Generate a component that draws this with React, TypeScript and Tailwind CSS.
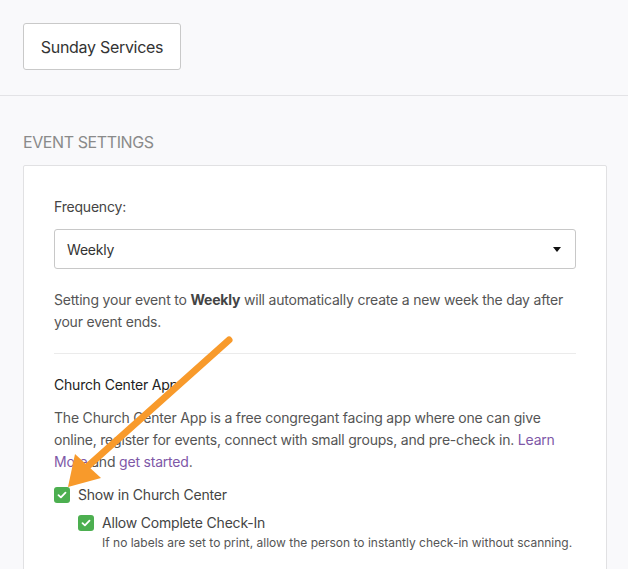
import React from "react";

function Check() {
  return (
    <span className="flex h-4 w-4 shrink-0 items-center justify-center rounded-[3px] bg-[#4caf50]">
      <svg width="10" height="8" viewBox="0 0 10 8" fill="none">
        <path d="M1.5 4.2 L3.9 6.4 L8.5 1.6" stroke="white" strokeWidth="1.8" strokeLinecap="round" strokeLinejoin="round" />
      </svg>
    </span>
  );
}

export default function App() {
  return (
    <div className="relative min-h-[569px] w-[628px] overflow-hidden bg-[#f9f9fb] font-['Inter','Noto_Sans',sans-serif] tracking-[-0.2px] text-[#333]">
      <div className="h-[96px] border-b border-[#e3e3e6] pl-[23px] pt-[23px]">
        <button className="flex h-[47px] w-[158px] items-center justify-center rounded-[3px] border border-[#c9c9c9] bg-white text-[16px] tracking-[-0.3px] text-[#333]">
          Sunday Services
        </button>
      </div>
      <div className="px-[23px] pr-[21px] pt-[34px]">
        <div className="text-[16px] leading-[24px] tracking-[-0.4px] text-[#8a8a8a]">EVENT SETTINGS</div>
        <div className="mt-[11px] h-[420px] rounded-t-[2px] border border-[#e1e1e3] bg-white px-[30px] pt-[31px]">
          <div className="text-[14px] leading-[20px] text-[#444]">Frequency:</div>
          <div className="mt-[12px] flex h-[40px] items-center justify-between rounded-[3px] border border-[#c8c8c8] px-[12px] text-[14px] text-[#333]">
            <span>Weekly</span>
            <svg width="8" height="5" viewBox="0 0 8 5" className="mr-[2px]">
              <path d="M0 0 H8 L4 5 Z" fill="#111" />
            </svg>
          </div>
          <p className="mt-[20px] whitespace-nowrap text-[14px] leading-[22px] text-[#555]">
            Setting your event to <b className="font-bold text-[#444]">Weekly</b> will automatically create a new week the day after
            <br />
            your event ends.
          </p>
          <div className="mt-[20px] h-px bg-[#ebebeb]" />
          <div className="mt-[21px] text-[14px] leading-[20px] text-[#222]">Church Center App</div>
          <p className="mt-[12px] whitespace-nowrap text-[14px] leading-[22px] text-[#555]">
            The Church Center App is a free congregant facing app where one can give
            <br />
            online, register for events, connect with small groups, and pre-check in.{" "}
            <span className="text-[#7e58a7]">Learn</span>
            <br />
            <span className="text-[#7e58a7]">More</span> and <span className="text-[#7e58a7]">get started</span>.
          </p>
          <div className="mt-[12px] flex items-center gap-[8px] text-[14px] leading-[20px] text-[#444]">
            <Check />
            <span>Show in Church Center</span>
          </div>
          <div className="ml-[24px] mt-[8px] flex items-start gap-[8px]">
            <div className="pt-[2px]">
              <Check />
            </div>
            <div>
              <div className="text-[14px] leading-[20px] text-[#444]">Allow Complete Check-In</div>
              <div className="mt-[2px] whitespace-nowrap text-[12px] leading-[16px] tracking-[0px] text-[#555]">
                If no labels are set to print, allow the person to instantly check-in without scanning.
              </div>
            </div>
          </div>
        </div>
      </div>
      <svg className="pointer-events-none absolute left-0 top-0" width="628" height="569" viewBox="0 0 628 569">
        <line x1="229" y1="340" x2="88" y2="466" stroke="#f89a2b" strokeWidth="7" strokeLinecap="round" />
        <polygon points="68,487 75,454 101,478" fill="#f89a2b" />
      </svg>
    </div>
  );
}
